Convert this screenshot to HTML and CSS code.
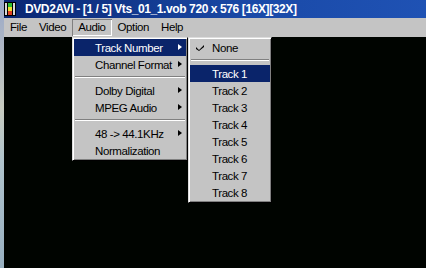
FILE: index.html
```html
<!DOCTYPE html>
<html>
  <head>
    <meta charset="UTF-8">
    <title>DVD2AVI</title>
    <link rel="stylesheet" href="styles.css">
  </head>
  <body>
    <div class="screen">
      <div class="desk"></div>
      <div class="window">
        <div class="titlebar">
          <svg class="app-icon" width="12" height="14" viewBox="0 0 12 14">
            <rect x="0" y="0" width="12" height="14" fill="#000"/>
            <rect x="1" y="1" width="2" height="12" fill="#d8d8d8"/>
            <rect x="9" y="1" width="2" height="12" fill="#d8d8d8"/>
            <rect x="4" y="1" width="4" height="4" fill="#30c030"/>
            <rect x="4" y="5" width="4" height="4" fill="#f0e030"/>
            <rect x="4" y="9" width="4" height="4" fill="#e04020"/>
          </svg>
          <span class="title">DVD2AVI - [1 / 5] Vts_01_1.vob 720 x 576 [16X][32X]</span>
        </div>
        <ul class="menubar">
          <li>File</li>
          <li>Video</li>
          <li class="open">Audio</li>
          <li>Option</li>
          <li>Help</li>
        </ul>
        <div class="client"></div>
      </div>

      <!-- Audio dropdown -->
      <div class="menu audio-menu">
        <div class="item active"><span>Track Number</span><i class="arrow"></i></div>
        <div class="item"><span>Channel Format</span><i class="arrow"></i></div>
        <div class="sep"></div>
        <div class="item"><span>Dolby Digital</span><i class="arrow"></i></div>
        <div class="item"><span>MPEG Audio</span><i class="arrow"></i></div>
        <div class="sep"></div>
        <div class="item"><span>48 -&gt; 44.1KHz</span><i class="arrow"></i></div>
        <div class="item"><span>Normalization</span></div>
      </div>

      <!-- Track Number submenu -->
      <div class="menu track-menu">
        <div class="item">
          <svg class="check" width="8" height="7" viewBox="0 0 8 7"><path d="M0 3 L3 6 L8 1 L8 3 L3 7 L0 5 Z" fill="#000"/></svg>
          <span>None</span>
        </div>
        <div class="sep"></div>
        <div class="item active"><span>Track 1</span></div>
        <div class="item"><span>Track 2</span></div>
        <div class="item"><span>Track 3</span></div>
        <div class="item"><span>Track 4</span></div>
        <div class="item"><span>Track 5</span></div>
        <div class="item"><span>Track 6</span></div>
        <div class="item"><span>Track 7</span></div>
        <div class="item"><span>Track 8</span></div>
      </div>
    </div>
  </body>
</html>
```

FILE: styles.css
```css
body {
  margin: 0;
  padding: 0;
  background: #000400;
  font-family: "Liberation Sans", Arial, sans-serif;
}
.screen {
  position: relative;
  display: flex;
  width: 426px;
  height: 268px;
  overflow: hidden;
}
.desk {
  width: 4px;
  background: linear-gradient(180deg, #9aa8c8, #c8ccc0 40%, #b0c4cc 60%, #98b0c0);
}
.window {
  flex: 1;
  display: flex;
  flex-direction: column;
}
.titlebar {
  height: 18px;
  display: flex;
  align-items: center;
  background: linear-gradient(90deg, #0a2672, #1a4aa8 60%, #1f52b4);
  color: white;
}
.app-icon {
  margin-right: 9px;
}
.title {
  font-weight: bold;
  font-size: 12px;
  letter-spacing: -0.4px;
  white-space: nowrap;
}
.menubar {
  list-style: none;
  margin: 0;
  padding: 0;
  height: 19px;
  display: flex;
  align-items: center;
  background: #c4c4c4;
  font-size: 11.5px;
  letter-spacing: -0.4px;
  color: #000;
}
.menubar li {
  padding: 0 6px;
  height: 17px;
  line-height: 17px;
}
.menubar .open {
  box-shadow: inset 1px 1px #808080, inset -1px -1px #fff;
}
.client {
  flex: 1;
  background: #000400;
}

/* dropdown menus */
.menu {
  position: absolute;
  top: 37px;
  box-sizing: border-box;
  background: #c4c4c4;
  border: 1px solid;
  border-color: #dcdcdc #000 #000 #dcdcdc;
  box-shadow: inset 1px 1px #fff, inset -1px -1px #808080;
  padding: 1px;
  font-size: 11.5px;
  letter-spacing: -0.4px;
  color: #000;
}
.audio-menu {
  left: 72px;
  width: 116px;
}
.track-menu {
  left: 188px;
  width: 84px;
}
.item {
  position: relative;
  height: 17px;
  line-height: 18px;
  padding-left: 21px;
  white-space: nowrap;
}
.track-menu .item {
  padding-left: 22px;
}
.item.active {
  background: #0a246a;
  color: #fff;
}
.arrow {
  position: absolute;
  right: 4px;
  top: 5px;
  width: 0;
  height: 0;
  border-top: 3.5px solid transparent;
  border-bottom: 3.5px solid transparent;
  border-left: 4px solid #000;
}
.item.active .arrow {
  border-left-color: #fff;
}
.check {
  position: absolute;
  left: 6px;
  top: 5px;
}
.sep {
  height: 9px;
  position: relative;
}
.sep::before {
  content: "";
  position: absolute;
  left: 1px;
  right: 1px;
  top: 3px;
  height: 1px;
  background: #808080;
  border-bottom: 1px solid #fff;
}
```
